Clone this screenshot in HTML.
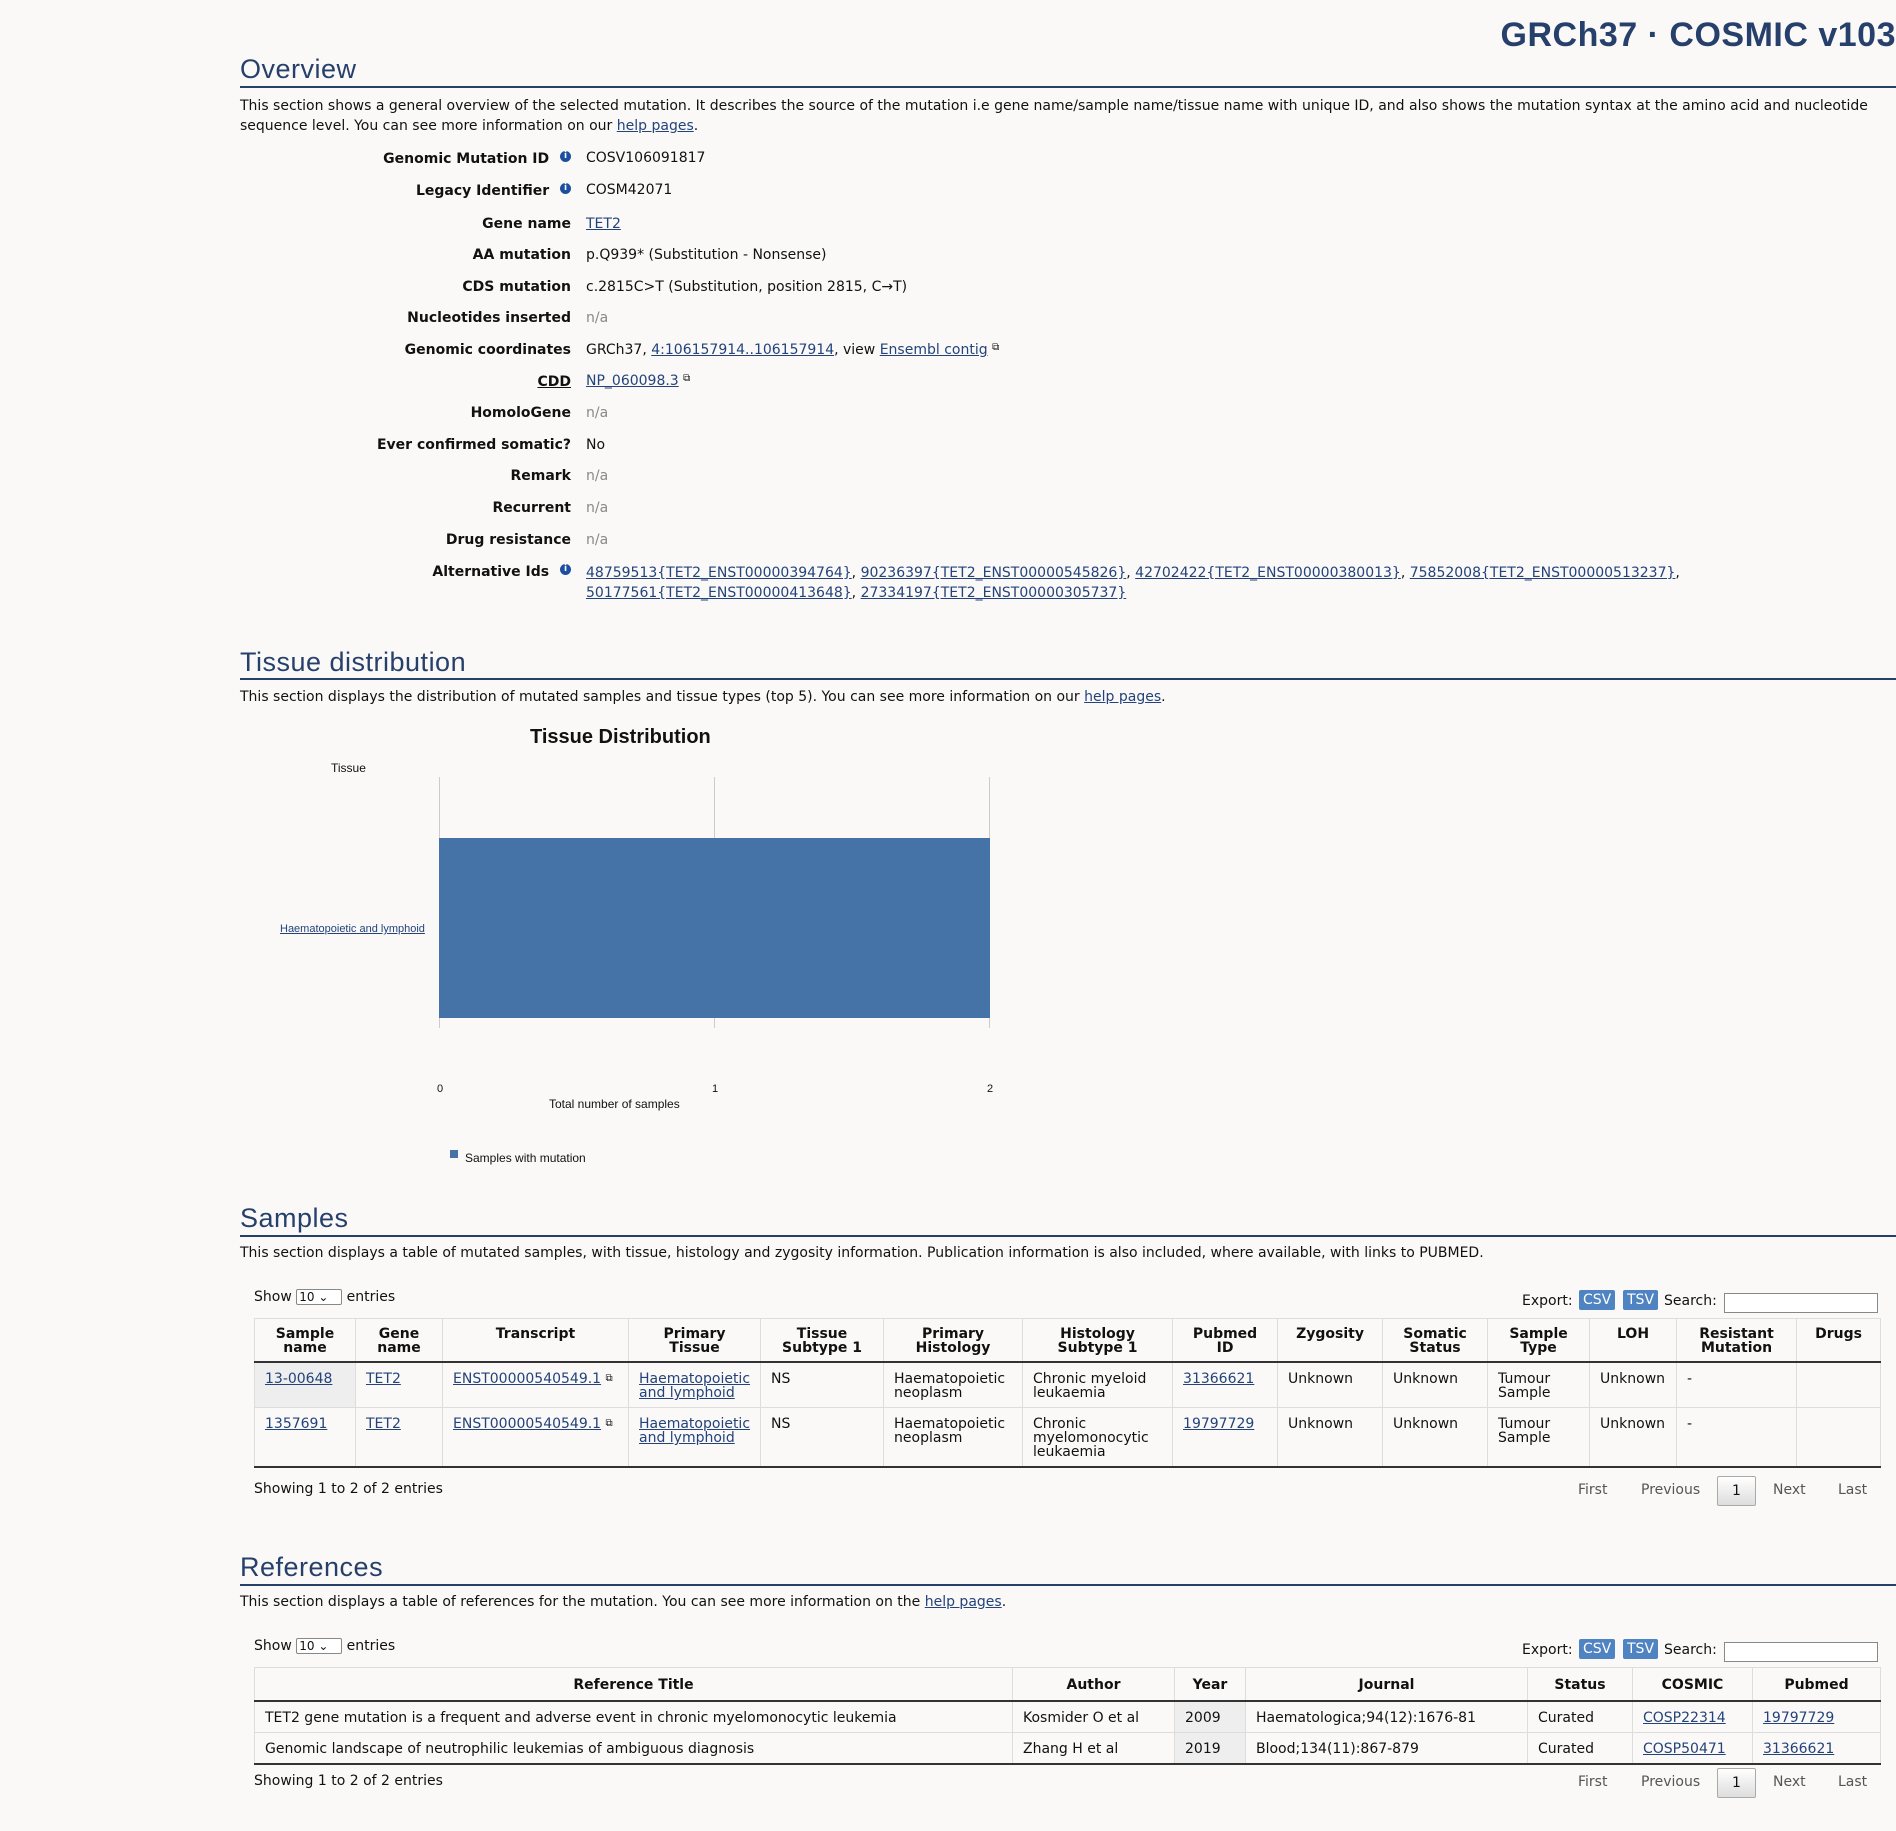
<!DOCTYPE html>
<html><head><meta charset="utf-8"><style>
body{margin:0;width:1896px;height:1831px;background:#faf9f8;font-family:"DejaVu Sans","Liberation Sans",sans-serif;font-size:14px;color:#111;position:relative;overflow:hidden}
.a{position:absolute;white-space:nowrap}
a{color:#23437a;text-decoration:underline}
h2{position:absolute;left:240px;margin:0;font-family:"Liberation Sans",sans-serif;font-weight:normal;font-size:27px;color:#27406b;letter-spacing:.5px}
.hl{position:absolute;left:240px;right:0;height:2px;background:#27406b}
.lbl{position:absolute;right:1325px;font-weight:bold;text-align:right;white-space:nowrap}
.val{position:absolute;left:586px;white-space:nowrap}
.na{color:#888}
.i{display:inline-block;width:11px;height:11px;border-radius:50%;background:#1d4fa0;color:#fff;font-size:9px;line-height:11px;text-align:center;vertical-align:top;margin-left:6px;font-weight:bold}
.ext{font-size:10px;vertical-align:top}
table{position:absolute;border-collapse:collapse;font-size:14px}
th{font-weight:bold;border-right:1px solid #ddd;border-bottom:2px solid #333;border-top:1px solid #ddd;padding:8px 10px 6px;line-height:14px;vertical-align:top;text-align:center;position:relative}
td{border-right:1px solid #ddd;border-bottom:1px solid #ddd;padding:9px 10px 7px;line-height:14px;vertical-align:top;text-align:left}
tr>:first-child{border-left:1px solid #ddd}
tbody tr:last-child td{border-bottom:2px solid #333}
.btn{position:absolute;background:#4f83c2;color:#fff;font-size:14px;padding:2px 4px;border-radius:2px}
.srch{position:absolute;width:152px;height:18px;border:1px solid #888;background:#fff}
.sel{display:inline-block;border:1px solid #888;font-size:12px;padding:0 2px;width:40px;background:#fff;border-radius:2px}
.pg{position:absolute;color:#555}
.pbox{position:absolute;border:1px solid #aaa;background:linear-gradient(#fff,#ddd);width:37px;height:28px;text-align:center;line-height:28px;border-radius:2px}
</style></head><body>
<div class="a" style="right:0;top:16px;font-family:'Liberation Sans',sans-serif;font-size:34px;font-weight:bold;color:#27406b;letter-spacing:.5px">GRCh37 · COSMIC v103</div>

<h2 style="top:54px">Overview</h2><div class="hl" style="top:86px"></div>
<div class="a" style="left:240px;top:96px;line-height:20px;white-space:normal;width:1650px">This section shows a general overview of the selected mutation. It describes the source of the mutation i.e gene name/sample name/tissue name with unique ID, and also shows the mutation syntax at the amino acid and nucleotide sequence level. You can see more information on our <a>help pages</a>.</div>

<div class="lbl" style="top:151px">Genomic Mutation ID <span class="i">i</span></div><div class="val" style="top:150px">COSV106091817</div>
<div class="lbl" style="top:183px">Legacy Identifier <span class="i">i</span></div><div class="val" style="top:182px">COSM42071</div>
<div class="lbl" style="top:216px">Gene name</div><div class="val" style="top:216px"><a>TET2</a></div>
<div class="lbl" style="top:247px">AA mutation</div><div class="val" style="top:247px">p.Q939* (Substitution - Nonsense)</div>
<div class="lbl" style="top:279px">CDS mutation</div><div class="val" style="top:279px">c.2815C&gt;T (Substitution, position 2815, C→T)</div>
<div class="lbl" style="top:310px">Nucleotides inserted</div><div class="val na" style="top:310px">n/a</div>
<div class="lbl" style="top:342px">Genomic coordinates</div><div class="val" style="top:342px">GRCh37, <a>4:106157914..106157914</a>, view <a>Ensembl contig</a> <span class="ext">⧉</span></div>
<div class="lbl" style="top:374px;text-decoration:underline">CDD</div><div class="val" style="top:373px"><a>NP_060098.3</a> <span class="ext">⧉</span></div>
<div class="lbl" style="top:405px">HomoloGene</div><div class="val na" style="top:405px">n/a</div>
<div class="lbl" style="top:437px">Ever confirmed somatic?</div><div class="val" style="top:437px">No</div>
<div class="lbl" style="top:468px">Remark</div><div class="val na" style="top:468px">n/a</div>
<div class="lbl" style="top:500px">Recurrent</div><div class="val na" style="top:500px">n/a</div>
<div class="lbl" style="top:532px">Drug resistance</div><div class="val na" style="top:532px">n/a</div>
<div class="lbl" style="top:564px">Alternative Ids <span class="i">i</span></div>
<div class="val" style="top:563px;line-height:20px"><a>48759513{TET2_ENST00000394764}</a>, <a>90236397{TET2_ENST00000545826}</a>, <a>42702422{TET2_ENST00000380013}</a>, <a>75852008{TET2_ENST00000513237}</a>,<br><a>50177561{TET2_ENST00000413648}</a>, <a>27334197{TET2_ENST00000305737}</a></div>

<h2 style="top:647px">Tissue distribution</h2><div class="hl" style="top:678px"></div>
<div class="a" style="left:240px;top:689px">This section displays the distribution of mutated samples and tissue types (top 5). You can see more information on our <a>help pages</a>.</div>

<div class="a" style="left:530px;top:726px;font-family:'Liberation Sans',sans-serif;font-weight:bold;font-size:20px">Tissue Distribution</div>
<div class="a" style="left:331px;top:761px;font-family:'Liberation Sans',sans-serif;font-size:12px">Tissue</div>
<div class="a" style="left:439px;top:777px;width:1px;height:251px;background:#ccc"></div>
<div class="a" style="left:714px;top:777px;width:1px;height:251px;background:#ccc"></div>
<div class="a" style="left:989px;top:777px;width:1px;height:251px;background:#ccc"></div>
<div class="a" style="left:439px;top:838px;width:551px;height:180px;background:#4673a7"></div>
<div class="a" style="left:280px;top:923px;font-family:'Liberation Sans',sans-serif;font-size:11px"><a>Haematopoietic and lymphoid</a></div>
<div class="a" style="left:437px;top:1083px;font-family:'Liberation Sans',sans-serif;font-size:11px">0</div>
<div class="a" style="left:712px;top:1083px;font-family:'Liberation Sans',sans-serif;font-size:11px">1</div>
<div class="a" style="left:987px;top:1083px;font-family:'Liberation Sans',sans-serif;font-size:11px">2</div>
<div class="a" style="left:549px;top:1097px;font-family:'Liberation Sans',sans-serif;font-size:12px">Total number of samples</div>
<div class="a" style="left:450px;top:1150px;width:8px;height:8px;background:#4673a7"></div>
<div class="a" style="left:465px;top:1151px;font-family:'Liberation Sans',sans-serif;font-size:12px">Samples with mutation</div>

<h2 style="top:1203px">Samples</h2><div class="hl" style="top:1235px"></div>
<div class="a" style="left:240px;top:1245px">This section displays a table of mutated samples, with tissue, histology and zygosity information. Publication information is also included, where available, with links to PUBMED.</div>
<div class="a" style="left:254px;top:1289px">Show <span class="sel">10 ⌄</span> entries</div>
<div class="a" style="left:1522px;top:1293px">Export:</div><div class="btn" style="left:1579px;top:1290px">CSV</div><div class="btn" style="left:1623px;top:1290px">TSV</div>
<div class="a" style="left:1664px;top:1293px">Search:</div><div class="srch" style="left:1724px;top:1293px"></div>
<table style="left:254px;top:1318px;width:1627px">
<thead><tr><th style="width:80px">Sample<br>name</th><th style="width:66px">Gene<br>name</th><th style="width:165px">Transcript</th><th style="width:97px">Primary<br>Tissue</th><th style="width:102px">Tissue<br>Subtype 1</th><th style="width:118px">Primary<br>Histology</th><th style="width:129px">Histology<br>Subtype 1</th><th style="width:84px">Pubmed<br>ID</th><th style="width:84px">Zygosity</th><th style="width:84px">Somatic<br>Status</th><th style="width:81px">Sample<br>Type</th><th style="width:66px">LOH</th><th style="width:99px">Resistant<br>Mutation</th><th>Drugs</th></tr></thead>
<tbody><tr style="height:45px"><td style="background:#eee"><a>13-00648</a></td><td><a>TET2</a></td><td style="white-space:nowrap"><a>ENST00000540549.1</a> <span class="ext">⧉</span></td><td><a>Haematopoietic<br>and lymphoid</a></td><td>NS</td><td>Haematopoietic<br>neoplasm</td><td>Chronic myeloid<br>leukaemia</td><td><a>31366621</a></td><td>Unknown</td><td>Unknown</td><td>Tumour<br>Sample</td><td>Unknown</td><td>-</td><td></td></tr>
<tr style="height:58px"><td><a>1357691</a></td><td><a>TET2</a></td><td style="white-space:nowrap"><a>ENST00000540549.1</a> <span class="ext">⧉</span></td><td><a>Haematopoietic<br>and lymphoid</a></td><td>NS</td><td>Haematopoietic<br>neoplasm</td><td>Chronic<br>myelomonocytic<br>leukaemia</td><td><a>19797729</a></td><td>Unknown</td><td>Unknown</td><td>Tumour<br>Sample</td><td>Unknown</td><td>-</td><td></td></tr></tbody></table>
<div class="a" style="left:254px;top:1481px">Showing 1 to 2 of 2 entries</div>
<div class="pg" style="left:1578px;top:1482px">First</div><div class="pg" style="left:1641px;top:1482px">Previous</div><div class="pbox" style="left:1717px;top:1476px">1</div><div class="pg" style="left:1773px;top:1482px">Next</div><div class="pg" style="left:1838px;top:1482px">Last</div>

<h2 style="top:1552px">References</h2><div class="hl" style="top:1584px"></div>
<div class="a" style="left:240px;top:1594px">This section displays a table of references for the mutation. You can see more information on the <a>help pages</a>.</div>
<div class="a" style="left:254px;top:1638px">Show <span class="sel">10 ⌄</span> entries</div>
<div class="a" style="left:1522px;top:1642px">Export:</div><div class="btn" style="left:1579px;top:1639px">CSV</div><div class="btn" style="left:1623px;top:1639px">TSV</div>
<div class="a" style="left:1664px;top:1642px">Search:</div><div class="srch" style="left:1724px;top:1642px"></div>
<table style="left:254px;top:1667px;width:1627px">
<thead><tr style="height:33px"><th style="width:737px;padding-top:10px">Reference Title</th><th style="width:141px;padding-top:10px">Author</th><th style="width:50px;padding-top:10px">Year</th><th style="width:261px;padding-top:10px">Journal</th><th style="width:84px;padding-top:10px">Status</th><th style="width:99px;padding-top:10px">COSMIC</th><th style="padding-top:10px">Pubmed</th></tr></thead>
<tbody><tr style="height:31px"><td>TET2 gene mutation is a frequent and adverse event in chronic myelomonocytic leukemia</td><td>Kosmider O et al</td><td style="background:#eee">2009</td><td>Haematologica;94(12):1676-81</td><td>Curated</td><td><a>COSP22314</a></td><td><a>19797729</a></td></tr>
<tr style="height:31px"><td>Genomic landscape of neutrophilic leukemias of ambiguous diagnosis</td><td>Zhang H et al</td><td style="background:#eee">2019</td><td>Blood;134(11):867-879</td><td>Curated</td><td><a>COSP50471</a></td><td><a>31366621</a></td></tr></tbody></table>
<div class="a" style="left:254px;top:1773px">Showing 1 to 2 of 2 entries</div>
<div class="pg" style="left:1578px;top:1774px">First</div><div class="pg" style="left:1641px;top:1774px">Previous</div><div class="pbox" style="left:1717px;top:1768px">1</div><div class="pg" style="left:1773px;top:1774px">Next</div><div class="pg" style="left:1838px;top:1774px">Last</div>
</body></html>
